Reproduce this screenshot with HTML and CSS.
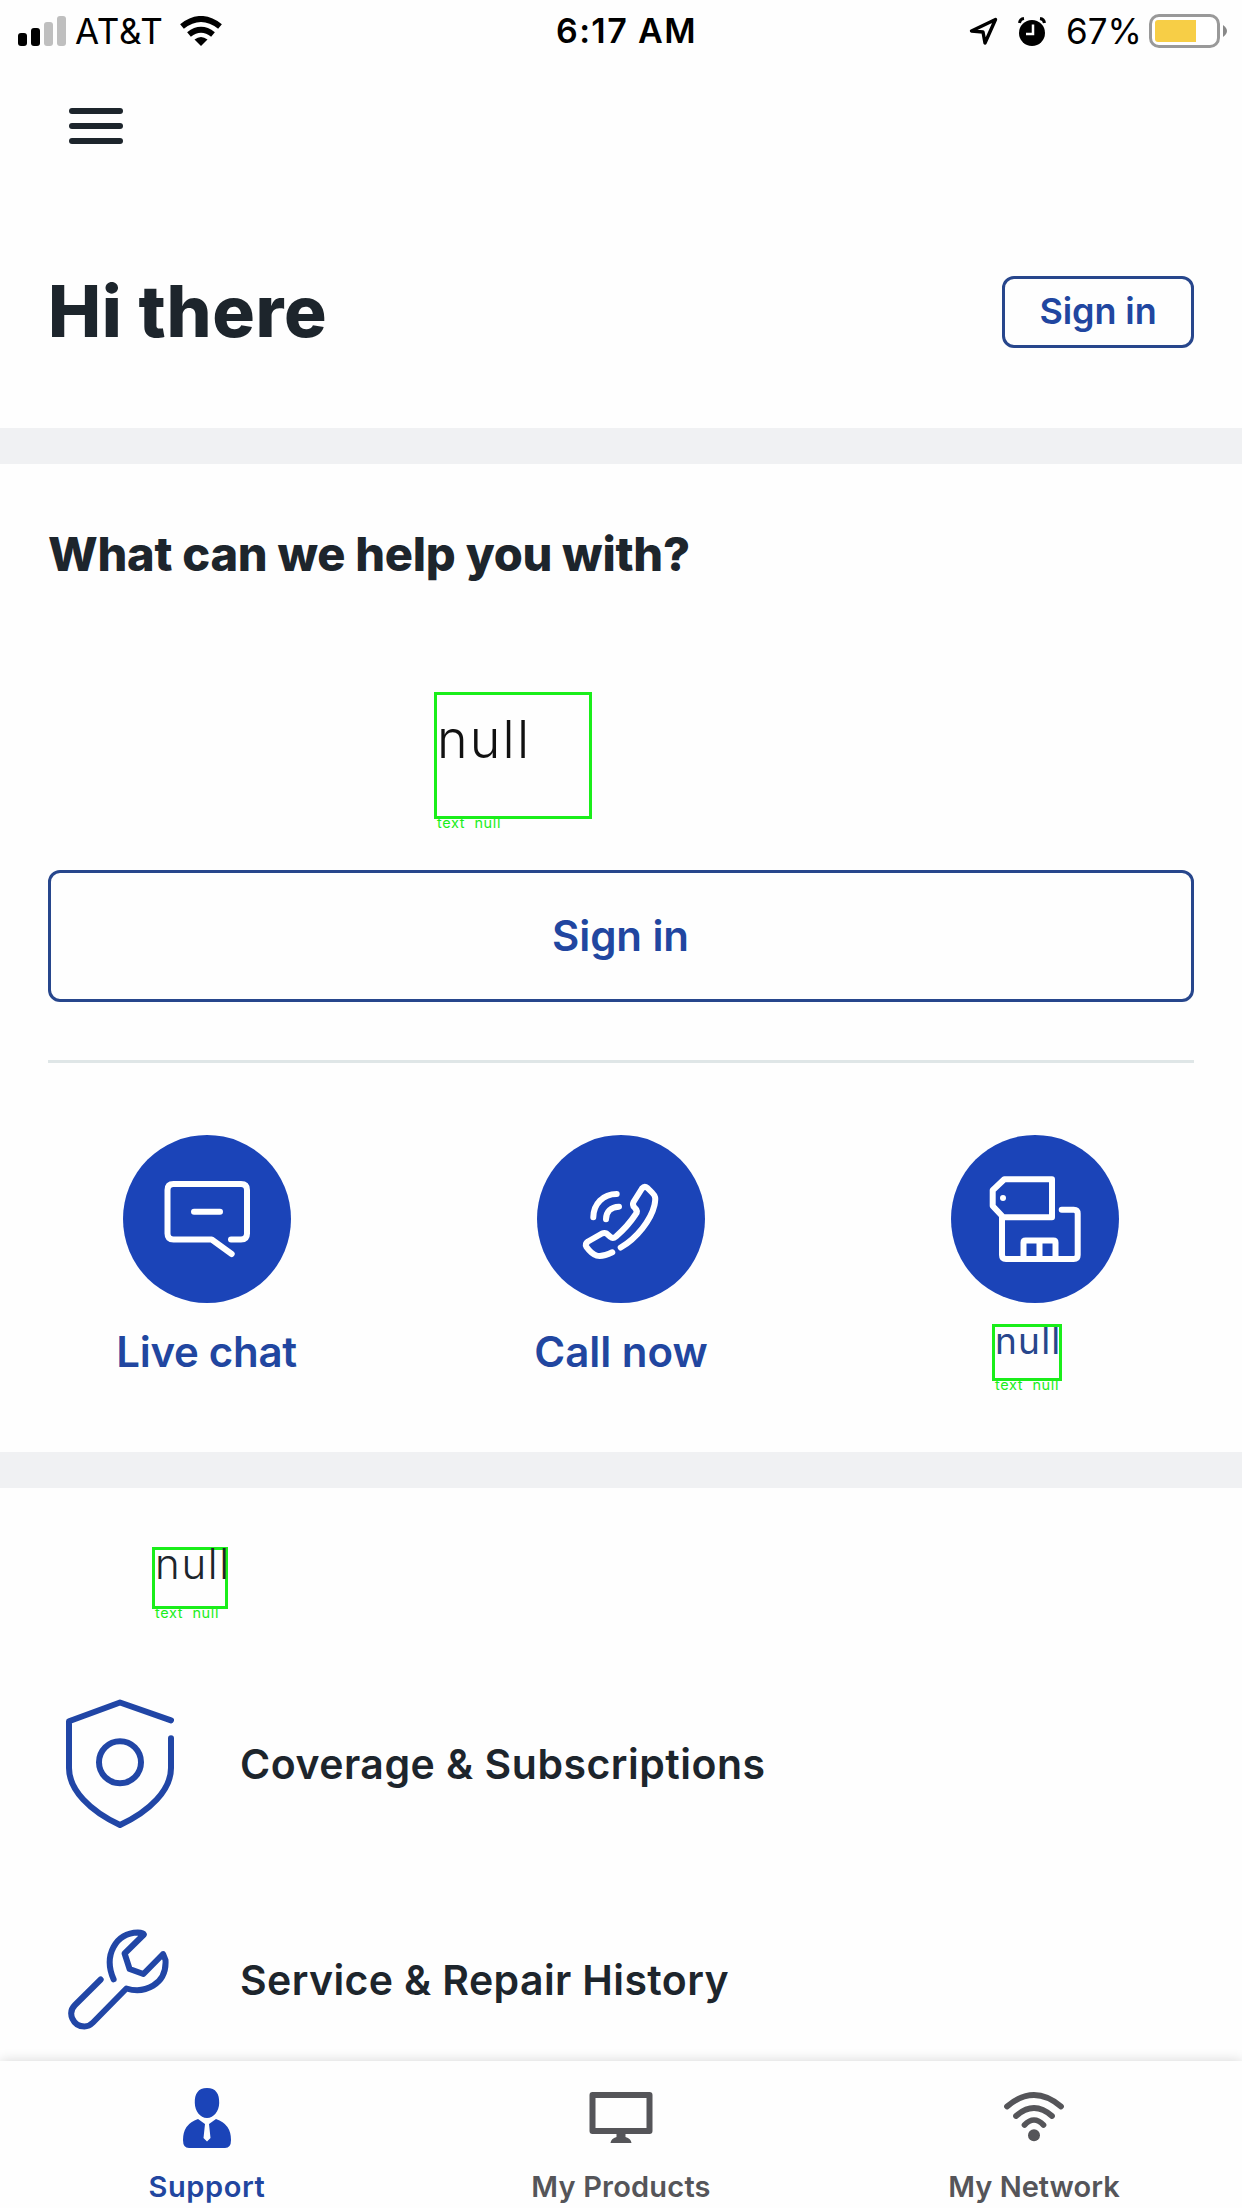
FILE: index.html
```html
<!DOCTYPE html>
<html lang="en">
<head>
<meta charset="utf-8">
<title>Support</title>
<link rel="stylesheet" href="styles.css">
</head>
<body>
<div class="status">
  <div class="status-left">
    <svg width="48" height="30" viewBox="0 0 48 30"><rect y="17" width="9" height="13" rx="3"/><rect x="13" y="12" width="9" height="18" rx="3"/><g fill="#bfbfbf"><rect x="26" y="6" width="9" height="24" rx="3"/><rect x="39" width="9" height="30" rx="3"/></g></svg>
    <span class="carrier">AT&amp;T</span>
    <svg class="status-wifi" width="42" height="30" viewBox="0 0 42 30"><g fill="none" stroke="#000" stroke-width="6"><path d="M2 10.500Q21-4.500 40 10.500"/><path d="M9 18.500Q21 9 33 18.500"/></g><path d="M14.500 23.500Q21 18.500 27.500 23.500L21 30Z"/></svg>
  </div>
  <span class="clock">6:17 AM</span>
  <div class="status-right">
    <svg width="29" height="29" viewBox="0 0 29 29"><path d="M2.500 14 26.500 2.500 16 26 14 15Z" fill="none" stroke="#000" stroke-width="3.400" stroke-linejoin="round"/></svg>
    <svg class="alarm" width="28" height="29" viewBox="0 0 28 29"><circle cx="14" cy="16" r="13"/><path d="M1.500 6Q2 2 6 1.500M26.500 6Q26 2 22 1.500" fill="none" stroke="#000" stroke-width="3"/><path d="M15 7.500V17H8" fill="none" stroke="#fff" stroke-width="2.500"/></svg>
    <span class="percent">67%</span>
    <svg class="battery" width="78" height="34" viewBox="0 0 78 34"><rect x="1.500" y="1.500" width="68" height="31" rx="8.500" fill="#fff" stroke="#999" stroke-width="3"/><path d="M9 6H47V28H9Q6 28 6 25V9Q6 6 9 6Z" fill="#f7ce46"/><path d="M74 11Q78 14 78 17T74 23Z" fill="#888"/></svg>
  </div>
</div>
<main class="content">
  <header class="top">
    <div class="menu"><i></i><i></i><i></i></div>
    <div class="greeting">
      <h1>Hi there</h1>
      <button class="btn btn-small">Sign in</button>
    </div>
  </header>
  <section class="help">
    <h2>What can we help you with?</h2>
    <button class="btn btn-large">Sign in</button>
    <div class="contact">
      <div class="option">
        <svg class="disc" viewBox="0 0 168 168"><path d="M108 104.500H118Q124 104.500 124 98.500V55Q124 49 118 49H50.500Q44.500 49 44.500 55V98.500Q44.500 104.500 50.500 104.500H88.700L108.700 119"/><path d="M71 76.700H97"/></svg>
        <span class="live">Live chat</span>
      </div>
      <div class="option">
        <svg class="disc" viewBox="0 0 168 168"><path d="M83.700 112.500C100 103 114 85 117.500 70C119 63 118.500 61 115 57.500L110.500 53Q107.500 50.500 105 53.500L96.500 67Q95 70 97.500 72.500Q101.500 76 98.500 79.500Q91 91 79 101.500Q76 104 73.500 102L69.500 98.500Q67.500 97.500 65 98.500L51 106.500Q47.500 109 49.500 112C56 121 61.500 124 75.300 117.300"/><path d="M56.300 82.300C56.500 69 66 59 79.700 59M69 84.300C69 76.500 74 72 82 71.700"/></svg>
        <span class="call">Call now</span>
      </div>
      <div class="option">
        <svg class="disc" viewBox="0 0 168 168"><path d="M53.300 44.300H101V82.300H52.300L41.700 71V55.300ZM51 82.300V120Q51 124 55 124H122.700Q126.700 124 126.700 120V78.700Q126.700 74.700 122.700 74.700H110.700M72.500 124V107.500Q72.500 105.500 74.500 105.500H102.500Q104.500 105.500 104.500 107.500V124M88.500 105.500V124"/><circle class="dot" cx="52" cy="63" r="3"/></svg>
      </div>
    </div>
  </section>
  <section class="list">
    <div class="row">
      <svg class="line-icon" width="108" height="132" viewBox="0 0 108 132"><path d="M105 22.300 54 4.500 3 23.300V70C3 92 24 113 54 127C84 113 105 92 105 70V40.300"/><circle cx="54" cy="64.300" r="21"/></svg>
      <span class="coverage">Coverage &amp; Subscriptions</span>
    </div>
    <div class="row">
      <svg class="line-icon" width="108" height="108" viewBox="0 0 108 108"><path d="M34.700 53.500 9 79C1 87 7 100.500 18.500 100.500Q23 100.500 27 96.500L60.400 62.500C78 68 101 59 99.500 34L97.100 28 77.400 48 63.600 43 58.600 27.500 77.900 8.500Q77 6.500 71.900 6.500C50 7 37 29 47.600 53.300"/></svg>
      <span class="service">Service &amp; Repair History</span>
    </div>
  </section>
</main>
<nav class="tabs">
  <div class="tab active">
    <svg width="48" height="60" viewBox="0 0 48 60"><path d="M24 0C33 0 36.500 6 36.200 15C36 23 31 30 24 30S12 23 11.800 15C11.500 6 15 0 24 0ZM15 31 22 36 20.500 50 24 53.500 27.500 50 26 36 33 31Q48 36 48 52Q48 60 42 60H6Q0 60 0 52Q0 36 15 31Z"/></svg>
    <span class="t1">Support</span>
  </div>
  <div class="tab">
    <svg width="64" height="60" viewBox="0 -4 64 60"><path fill-rule="evenodd" d="M3.500 0H60.500Q63.500 0 63.500 3V39Q63.500 42 60.500 42H36.500V45Q42 46.500 42.500 51H21.500Q22 46.500 27.500 45V42H3.500Q.500 42 .500 39V3Q.500 0 3.500 0ZM6.500 6V36H57.500V6Z"/></svg>
    <span class="t2">My Products</span>
  </div>
  <div class="tab">
    <svg class="network" width="62" height="60" viewBox="0 -4 62 60"><g fill="none" stroke="#555559" stroke-width="5.700" stroke-linecap="round"><path d="M4 14.500Q31-8.500 58 14.500M13 24Q31 8 49 24M21.500 33Q31 23 40.500 33"/></g><circle cx="31" cy="43.300" r="6"/></svg>
    <span class="t3">My Network</span>
  </div>
</nav>
<div class="mark mark-a"><b>null</b><small>text&nbsp; null</small></div>
<div class="mark mark-b"><b>null</b><small>text&nbsp; null</small></div>
<div class="mark mark-c"><b>null</b><small>text&nbsp; null</small></div>
</body>
</html>
```
FILE: styles.css
```css
* { box-sizing: border-box; }
body {
  margin: 0; width: 1242px; height: 2208px; overflow: hidden; position: relative;
  display: flex; flex-direction: column; background: #fefefe; color: #1d252c;
  font-family: Inter, "Liberation Sans", sans-serif;
}
svg { display: block; flex: none; }
span, h1, h2, button { white-space: nowrap; }
.status { height: 63px; flex: none; display: grid; grid-template-columns: 1fr auto 1fr; align-items: center; padding: 0 15px 1px 18px; color: #000; line-height: 40px; }
.status-left, .status-right { display: flex; align-items: center; }
.status-right { justify-content: flex-end; }
.carrier { font-size: 35px; letter-spacing: .7px; margin-left: 9px; width: 105px; }
.clock { font-size: 34px; font-weight: 600; letter-spacing: 1.4px; padding-left: 8px; }
.alarm { margin-left: 20px; }
.percent { font-size: 35px; margin-left: 20px; }
.battery { margin-left: 7px; }
.content { flex: 1; min-height: 0; overflow: hidden; }
.top { height: 365px; padding: 45px 48px 0; }
.menu { display: flex; flex-direction: column; gap: 9px; width: 54px; margin-left: 21px; }
.menu i { height: 6px; border-radius: 3px; background: #1d252c; }
.greeting { display: flex; justify-content: space-between; align-items: center; margin-top: 132px; height: 72px; }
h1, h2 { margin: 0; font-weight: 800; }
h1 { font-size: 71px; line-height: 70px; padding-bottom: 2px; letter-spacing: .6px; }
.btn { display: block; padding: 0; border: 3px solid #27468c; border-radius: 12px; background: none; color: #2146a0; font-family: inherit; font-weight: 600; }
.btn-small { width: 192px; height: 72px; font-size: 36px; padding-bottom: 2px; letter-spacing: -.1px; }
.help { height: 1060px; border: solid #f0f1f3; border-width: 36px 0; padding: 60px 48px 0; }
h2 { font-size: 47px; line-height: 60px; letter-spacing: -.25px; }
.btn-large { width: 100%; height: 132px; margin-top: 286px; font-size: 42px; padding-bottom: 1px; padding-right: 1px; letter-spacing: -.1px; }
.contact { display: grid; grid-template-columns: repeat(3, 1fr); margin: 58px -48px 0; padding-top: 75px; position: relative; }
.contact::before { content: ""; position: absolute; top: 0; left: 48px; right: 48px; height: 3px; background: #dfe6e7; }
.option { display: flex; flex-direction: column; align-items: center; gap: 24px; color: #2146a0; font-size: 42px; font-weight: 600; line-height: 50px; }
.live { letter-spacing: -.3px; margin-left: -1px; }
.disc { width: 168px; height: 168px; border-radius: 50%; background: #1b44b8; fill: none; stroke: #fff; stroke-width: 6; stroke-linecap: round; stroke-linejoin: round; }
.dot { fill: #fff; stroke: none; }
.list { padding: 168px 0 0 66px; }
.row { height: 216px; display: flex; align-items: center; gap: 66px; font-size: 41px; font-weight: 600; }
.coverage { letter-spacing: .5px; }
.service { letter-spacing: .38px; }
.line-icon { fill: none; stroke: #2146a6; stroke-width: 6; stroke-linecap: round; stroke-linejoin: round; }
.tabs { height: 147px; flex: none; display: grid; grid-template-columns: repeat(3, 1fr); background: #fefefe; box-shadow: 0 0 12px rgba(0,0,0,.16); z-index: 1; }
.tab { display: flex; flex-direction: column; align-items: center; padding-top: 27px; gap: 20px; color: #555559; fill: #555559; font-size: 29px; font-weight: 600; line-height: 38px; }
.active { color: #2146a0; fill: #1b44b8; }
.t1 { letter-spacing: .6px; }
.t2 { letter-spacing: .2px; }
.network, .t3 { margin-left: -2px; }
/* annotation boxes laid over the page */
.mark { position: absolute; border: 3px solid #1aee1a; }
.mark b { position: absolute; font-weight: 300; line-height: 1; }
.mark small { position: absolute; left: 0; bottom: -15px; font-size: 14.5px; line-height: 16px; letter-spacing: .6px; color: #1aee1a; white-space: nowrap; }
.mark-a { left: 434px; top: 692px; width: 158px; height: 127px; color: #111; }
.mark-a b { font-size: 52px; left: 0; top: 19px; letter-spacing: 2.2px; }
.mark-b { left: 992px; top: 1324px; width: 70px; height: 57px; color: #27468c; }
.mark-b b { font-size: 37px; left: 0; top: -5px; font-weight: 400; letter-spacing: 1.2px; }
.mark-c { left: 152px; top: 1547px; width: 76px; height: 62px; color: #1d252c; }
.mark-c b { font-size: 42px; left: 0; top: -7px; letter-spacing: 1.7px; }
```
